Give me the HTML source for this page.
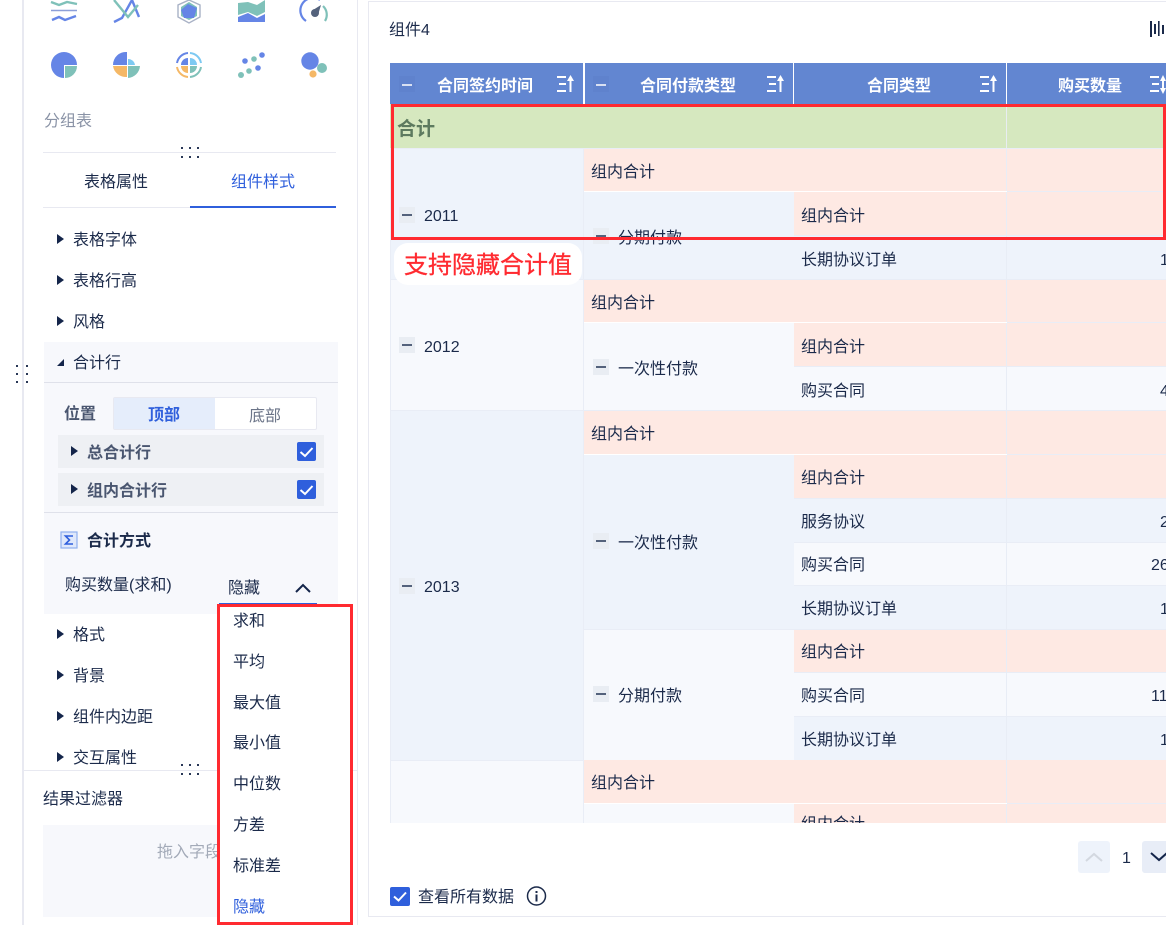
<!DOCTYPE html>
<html><head><meta charset="utf-8"><style>
html,body{margin:0;padding:0;background:#fff}
#r{position:relative;width:1166px;height:925px;overflow:hidden;background:#fff;font-family:"Liberation Sans","Noto Sans CJK SC",sans-serif;font-size:16px;color:#1b2a4a}
#r div,#r span.a{position:absolute;box-sizing:border-box}
.t{white-space:nowrap;line-height:22px;margin-top:2px}
.m{width:16px;height:16px;background:#e9edf3}
.m:after{content:"";position:absolute;left:3px;top:7px;width:10px;height:2px;background:#54627c}
.tri{width:0;height:0;border-left:7px solid #14254a;border-top:5.5px solid transparent;border-bottom:5.5px solid transparent}
.cb{width:19px;height:19px;background:#2f5fdc;border-radius:2px}
.cb svg{position:absolute;left:0;top:0}
.h{color:#fff;font-weight:bold;line-height:22px;white-space:nowrap;top:76px}
.wm{width:16px;height:16px;top:76px;background:#5f82cd}
.wm:after{content:"";position:absolute;left:3px;top:8px;width:10px;height:2px;background:#d8e0f2}
</style></head><body><div id="r">

<!-- left rail lines -->
<div style="left:22px;top:0;width:2px;height:925px;background:#e8e9f1"></div>
<div style="left:357px;top:0;width:1px;height:925px;background:#e8e9f1"></div>

<!-- chart icons -->
<svg style="position:absolute;left:0;top:0" width="357" height="100" viewBox="0 0 357 100">
<g fill="none" stroke-width="2.4">
<path d="M51 2l8 3 8-3 10 2" stroke="#7fc1b9"/><path d="M51 10.500H77" stroke="#8d9fd8" stroke-width="1.5"/><path d="M52 20l7-3 6 3 11-4" stroke="#6585e6"/>
<path d="M114 22l8-4 10-18 7 17" stroke="#6585e6"/><path d="M114 0l14 17 10-12" stroke="#7fc1b9"/>
<path d="M189 0l11 5v12l-11 6-11-6V5z" stroke="#a9b2c6" stroke-width="1.4"/></g>
<path d="M189 2l8 5v9l-8 4-8-4V7z" fill="#7fc1b9"/><path d="M188 4l9 4-3 10h-10l-3-8z" fill="#6585e6"/>
<path d="M238 3l10-1 9 3 8-5v12l-8 4-9-4-10 3z" fill="#7fc1b9"/><path d="M238 17l10-4 9 5 8-4v8h-27z" fill="#6585e6"/>
<path d="M306 21a12 12 0 0 1 14-21" fill="none" stroke="#6585e6" stroke-width="2.2"/><path d="M323 6a12 12 0 0 1 2 15" fill="none" stroke="#7fc1b9" stroke-width="2.2"/><circle cx="315" cy="13" r="4" fill="#54627c"/><path d="M313 10l8-5-3 10z" fill="#54627c"/>
<path d="M64 52a13 13 0 1 0 0 26V65h13a13 13 0 0 0-13-13z" fill="#6585e6"/><path d="M65 66h12a12 12 0 0 1-12 12z" fill="#7fc1b9"/>
<path d="M127 52v13h-14a13 13 0 0 1 14-13z" fill="#6585e6"/><path d="M128 59a7 7 0 0 1 7 6h-7z" fill="#7dc9f2"/><path d="M113 66h14v11a13 13 0 0 1-14-11z" fill="#f5b866"/><path d="M128 66h12a13 13 0 0 1-12 12z" fill="#7fc1b9"/>
<g fill="none" stroke-width="2"><path d="M177 63a12 12 0 0 1 11-10" stroke="#6585e6"/><path d="M190 53a12 12 0 0 1 11 10" stroke="#7dc9f2"/><path d="M177 67a12 12 0 0 0 11 10" stroke="#f5b866"/><path d="M190 77a12 12 0 0 0 11-10" stroke="#7fc1b9"/></g>
<path d="M188 58v7h-7a7 7 0 0 1 7-7z" fill="#6585e6"/><path d="M190 58a7 7 0 0 1 7 7h-7z" fill="#7dc9f2"/><path d="M181 66h7v7a7 7 0 0 1-7-7z" fill="#f5b866"/><path d="M190 66h7a7 7 0 0 1-7 7z" fill="#7fc1b9"/>
<circle cx="241" cy="75" r="3" fill="#7fc1b9"/><circle cx="249" cy="71" r="2.8" fill="#7fc1b9"/><circle cx="258" cy="68" r="2.8" fill="#6585e6"/><circle cx="245" cy="61" r="2.8" fill="#6585e6"/><circle cx="254" cy="59" r="2.8" fill="#7fc1b9"/><circle cx="262" cy="55" r="2.8" fill="#6585e6"/>
<circle cx="310" cy="61" r="8.700" fill="#6585e6"/><circle cx="322" cy="68" r="5" fill="#7fc1b9"/><circle cx="313" cy="74" r="3.6" fill="#f5b866"/>
</svg>

<div class="t" style="left:44px;top:109px;color:#8a93a6">分组表</div>
<div style="left:43px;top:152px;width:293px;height:1px;background:#e8e9f1"></div>
<svg style="position:absolute;left:180px;top:146px" width="20" height="14"><g fill="#2a3857"><rect x="1" y="1" width="2" height="2"/><rect x="9" y="1" width="2" height="2"/><rect x="17" y="1" width="2" height="2"/><rect x="1" y="10" width="2" height="2"/><rect x="9" y="10" width="2" height="2"/><rect x="17" y="10" width="2" height="2"/></g></svg>
<div class="t" style="left:84px;top:170px">表格属性</div>
<div class="t" style="left:231px;top:170px;color:#2f5fdc">组件样式</div>
<div style="left:43px;top:207px;width:147px;height:1px;background:#e8e9f1"></div>
<div style="left:190px;top:206px;width:146px;height:2px;background:#2f5fdc"></div>

<div class="tri" style="left:57px;top:234px"></div><div class="t" style="left:73px;top:228px">表格字体</div>
<div class="tri" style="left:57px;top:275px"></div><div class="t" style="left:73px;top:269px">表格行高</div>
<div class="tri" style="left:57px;top:316px"></div><div class="t" style="left:73px;top:310px">风格</div>

<!-- 合计行 panel -->
<div style="left:44px;top:342px;width:294px;height:272px;background:#f7f8fc"></div>
<div style="left:44px;top:382px;width:294px;height:1px;background:#dfe1ea"></div>
<svg style="position:absolute;left:56px;top:358px" width="9" height="9"><path d="M1 8L8 1V8z" fill="#14254a"/></svg>
<div class="t" style="left:73px;top:351px">合计行</div>
<div class="t" style="left:64px;top:402px;color:#4a5670;font-weight:bold">位置</div>
<div style="left:113px;top:397px;width:204px;height:33px;background:#fff;border:1px solid #e8e9f1;border-radius:2px"></div>
<div style="left:114px;top:398px;width:101px;height:31px;background:#e5edfb"></div>
<div class="t" style="left:148px;top:403px;color:#2f5fdc;font-weight:bold">顶部</div>
<div class="t" style="left:249px;top:404px;color:#6b7488">底部</div>
<div style="left:58px;top:435px;width:266px;height:33px;background:#eef0f4"></div>
<div class="tri" style="left:71px;top:446px"></div>
<div class="t" style="left:87px;top:441px;color:#4a5670;font-weight:bold">总合计行</div>
<div class="cb" style="left:297px;top:442px"><svg width="19" height="19"><path d="M3.500 10l4.500 4 7.500-8" fill="none" stroke="#fff" stroke-width="2"/></svg></div>
<div style="left:58px;top:473px;width:266px;height:33px;background:#eef0f4"></div>
<div class="tri" style="left:71px;top:484px"></div>
<div class="t" style="left:87px;top:479px;color:#4a5670;font-weight:bold">组内合计行</div>
<div class="cb" style="left:297px;top:480px"><svg width="19" height="19"><path d="M3.500 10l4.500 4 7.500-8" fill="none" stroke="#fff" stroke-width="2"/></svg></div>
<div style="left:44px;top:512px;width:294px;height:1px;background:#dfe1ea"></div>
<svg style="position:absolute;left:60px;top:531px" width="18" height="18"><rect x="1" y="1" width="16" height="16" fill="#dfe8fb" stroke="#8fb0ee" stroke-width="1.2"/><path d="M13 5H5.500L9.500 9 5.500 13H13" fill="none" stroke="#2f5fdc" stroke-width="1.6"/></svg>
<div class="t" style="left:87px;top:529px;font-weight:bold">合计方式</div>
<div class="t" style="left:65px;top:573px">购买数量(求和)</div>
<div class="t" style="left:228px;top:576px">隐藏</div>
<svg style="position:absolute;left:294px;top:581px" width="18" height="14"><path d="M2 11L9 4l7 7" fill="none" stroke="#14254a" stroke-width="2"/></svg>
<div style="left:219px;top:603px;width:98px;height:2px;background:#2f5fdc"></div>

<div class="tri" style="left:57px;top:629px"></div><div class="t" style="left:73px;top:623px">格式</div>
<div class="tri" style="left:57px;top:670px"></div><div class="t" style="left:73px;top:664px">背景</div>
<div class="tri" style="left:57px;top:711px"></div><div class="t" style="left:73px;top:705px">组件内边距</div>
<div class="tri" style="left:57px;top:752px"></div><div class="t" style="left:73px;top:746px">交互属性</div>
<div style="left:23px;top:770px;width:334px;height:1px;background:#e8e9f1"></div>
<svg style="position:absolute;left:180px;top:763px" width="20" height="14"><g fill="#2a3857"><rect x="1" y="1" width="2" height="2"/><rect x="9" y="1" width="2" height="2"/><rect x="17" y="1" width="2" height="2"/><rect x="1" y="10" width="2" height="2"/><rect x="9" y="10" width="2" height="2"/><rect x="17" y="10" width="2" height="2"/></g></svg>
<div class="t" style="left:43px;top:787px">结果过滤器</div>
<div style="left:43px;top:825px;width:294px;height:92px;background:#f7f8fc"></div>
<div class="t" style="left:157px;top:840px;color:#a3aab8">拖入字段</div>
<svg style="position:absolute;left:15px;top:363px" width="14" height="22"><g fill="#2a3857"><rect x="1" y="2" width="2" height="2"/><rect x="11" y="2" width="2" height="2"/><rect x="1" y="10" width="2" height="2"/><rect x="11" y="10" width="2" height="2"/><rect x="1" y="18" width="2" height="2"/><rect x="11" y="18" width="2" height="2"/></g></svg>

<!-- dropdown -->
<div style="left:217px;top:604px;width:136px;height:321px;background:#fff;border:3px solid #ff2a30"></div>
<div class="t" style="left:233px;top:609px">求和</div>
<div class="t" style="left:233px;top:650px">平均</div>
<div class="t" style="left:233px;top:691px">最大值</div>
<div class="t" style="left:233px;top:731px">最小值</div>
<div class="t" style="left:233px;top:772px">中位数</div>
<div class="t" style="left:233px;top:813px">方差</div>
<div class="t" style="left:233px;top:854px">标准差</div>
<div class="t" style="left:233px;top:895px;color:#2f5fdc">隐藏</div>

<!-- right card -->
<div style="left:368px;top:1px;width:810px;height:916px;border:1px solid #e8e9f1;background:#fff"></div>
<div class="t" style="left:389px;top:18px">组件4</div>
<svg style="position:absolute;left:1149px;top:20px" width="17" height="18"><g fill="#1b2a4a"><rect x="1" y="1" width="2" height="16"/><rect x="5" y="4" width="2" height="10"/><rect x="9" y="1" width="1.6" height="15"/><rect x="13" y="5" width="2" height="9"/></g></svg>

<!-- table -->
<div style="left:390px;top:63px;width:776px;height:760px;overflow:hidden;background:#e9edf6" id="tb">
<!-- backgrounds, relative to 390,63 -->
<div style="left:0;top:0;width:776px;height:41px;background:#6286d1"></div>
<div style="left:193px;top:0;width:1.5px;height:41px;background:#fff"></div>
<div style="left:403px;top:0;width:1px;height:41px;background:#fff"></div>
<div style="left:616px;top:0;width:1px;height:41px;background:#fff"></div>
<div style="left:0;top:41px;width:776px;height:44px;background:#d6e8bf"></div>
<div style="left:616px;top:41px;width:1px;height:44px;background:#e8edf2"></div>

<div style="left:1px;top:86px;width:192px;height:130px;background:#eef3fb"></div>
<div style="left:1px;top:217px;width:192px;height:130px;background:#f7f9fd"></div>
<div style="left:1px;top:348px;width:192px;height:349px;background:#eef3fb"></div>
<div style="left:1px;top:698px;width:192px;height:70px;background:#f7f9fd"></div>

<div style="left:194px;top:86px;width:582px;height:42px;background:#fee9e3"></div>
<div style="left:194px;top:129px;width:210px;height:87px;background:#eef3fb"></div>
<div style="left:404px;top:129px;width:372px;height:43px;background:#fee9e3"></div>
<div style="left:404px;top:173px;width:372px;height:43px;background:#eef3fb"></div>

<div style="left:194px;top:217px;width:582px;height:42px;background:#fee9e3"></div>
<div style="left:194px;top:260px;width:210px;height:87px;background:#f7f9fd"></div>
<div style="left:404px;top:260px;width:372px;height:43px;background:#fee9e3"></div>
<div style="left:404px;top:304px;width:372px;height:43px;background:#f7f9fd"></div>

<div style="left:194px;top:348px;width:582px;height:43px;background:#fee9e3"></div>
<div style="left:194px;top:392px;width:210px;height:174px;background:#eef3fb"></div>
<div style="left:404px;top:392px;width:372px;height:43px;background:#fee9e3"></div>
<div style="left:404px;top:436px;width:372px;height:43px;background:#eef3fb"></div>
<div style="left:404px;top:480px;width:372px;height:42px;background:#f7f9fd"></div>
<div style="left:404px;top:523px;width:372px;height:43px;background:#eef3fb"></div>
<div style="left:194px;top:567px;width:210px;height:130px;background:#f7f9fd"></div>
<div style="left:404px;top:567px;width:372px;height:42px;background:#fee9e3"></div>
<div style="left:404px;top:610px;width:372px;height:43px;background:#f7f9fd"></div>
<div style="left:404px;top:654px;width:372px;height:43px;background:#eef3fb"></div>

<div style="left:194px;top:697px;width:582px;height:43px;background:#fee9e3"></div>
<div style="left:194px;top:741px;width:210px;height:30px;background:#f7f9fd"></div>
<div style="left:404px;top:741px;width:372px;height:30px;background:#fee9e3"></div>
<div class="t" style="left:411px;top:749px">组内合计</div>

<!-- grid lines -->
<div style="left:616px;top:86px;width:1px;height:680px;background:#e8edf6"></div>
<div style="left:194px;top:128px;width:423px;height:1px;background:#fff"></div>
<div style="left:194px;top:259px;width:423px;height:1px;background:#fff"></div>
<div style="left:194px;top:391px;width:423px;height:1px;background:#fff"></div>
<div style="left:194px;top:740px;width:423px;height:1px;background:#fff"></div>

<!-- row text -->
<div class="t" style="left:7px;top:54px;font-size:19px;font-weight:bold;color:#5d7a5f">合计</div>
<div class="t" style="left:201px;top:97px">组内合计</div>
<div class="t" style="left:411px;top:141px">组内合计</div>
<div class="t" style="left:411px;top:185px">长期协议订单</div>
<div class="t" style="left:201px;top:228px">组内合计</div>
<div class="t" style="left:411px;top:272px">组内合计</div>
<div class="t" style="left:411px;top:316px">购买合同</div>
<div class="t" style="left:201px;top:359px">组内合计</div>
<div class="t" style="left:411px;top:403px">组内合计</div>
<div class="t" style="left:411px;top:447px">服务协议</div>
<div class="t" style="left:411px;top:490px">购买合同</div>
<div class="t" style="left:411px;top:534px">长期协议订单</div>
<div class="t" style="left:411px;top:577px">组内合计</div>
<div class="t" style="left:411px;top:621px">购买合同</div>
<div class="t" style="left:411px;top:665px">长期协议订单</div>
<div class="t" style="left:201px;top:708px">组内合计</div>

<div class="m" style="left:9px;top:144px"></div><div class="t" style="left:34px;top:141px">2011</div>
<div class="m" style="left:9px;top:274px"></div><div class="t" style="left:34px;top:272px">2012</div>
<div class="m" style="left:9px;top:515px"></div><div class="t" style="left:34px;top:512px">2013</div>
<div class="m" style="left:203px;top:165px"></div><div class="t" style="left:228px;top:163px">分期付款</div>
<div class="m" style="left:203px;top:296px"></div><div class="t" style="left:228px;top:294px">一次性付款</div>
<div class="m" style="left:203px;top:470px"></div><div class="t" style="left:228px;top:468px">一次性付款</div>
<div class="m" style="left:203px;top:623px"></div><div class="t" style="left:228px;top:621px">分期付款</div>

<div class="t" style="left:770px;top:185px">1</div>
<div class="t" style="left:770px;top:316px">4</div>
<div class="t" style="left:770px;top:447px">2</div>
<div class="t" style="left:761px;top:490px">26</div>
<div class="t" style="left:770px;top:534px">1</div>
<div class="t" style="left:761px;top:621px">11</div>
<div class="t" style="left:770px;top:665px">1</div>
</div>

<!-- header text, page coords -->
<div class="wm" style="left:399px"></div>
<div class="h" style="left:437px">合同签约时间</div>
<div class="wm" style="left:593px"></div>
<div class="h" style="left:640px">合同付款类型</div>
<div class="h" style="left:867px">合同类型</div>
<div class="h" style="left:1058px">购买数量</div>
<svg style="position:absolute;left:556px;top:74px" width="20" height="20"><path d="M1 3h9M3 10h7M1 17h9M14.500 18V6" fill="none" stroke="#fff" stroke-width="2"/><path d="M11 7L14.500 1 18 7z" fill="#fff"/></svg>
<svg style="position:absolute;left:766px;top:74px" width="20" height="20"><path d="M1 3h9M3 10h7M1 17h9M14.500 18V6" fill="none" stroke="#fff" stroke-width="2"/><path d="M11 7L14.500 1 18 7z" fill="#fff"/></svg>
<svg style="position:absolute;left:979px;top:74px" width="20" height="20"><path d="M1 3h9M3 10h7M1 17h9M14.500 18V6" fill="none" stroke="#fff" stroke-width="2"/><path d="M11 7L14.500 1 18 7z" fill="#fff"/></svg>
<svg style="position:absolute;left:1149px;top:74px" width="17" height="20"><path d="M1 3h9M3 10h7M1 17h9M14 7v8" fill="none" stroke="#fff" stroke-width="2"/><path d="M11 7L14 1l3 6zM11 14l3 6 3-6z" fill="#fff"/></svg>

<!-- annotation -->
<div style="left:391px;top:104px;width:775px;height:136px;border:3px solid #ff2a30"></div>
<div style="left:394px;top:243px;width:188px;height:42px;background:#fff;border-radius:14px"></div>
<div class="t" style="left:404px;top:249px;font-size:24px;line-height:30px;color:#ff2a30;-webkit-text-stroke:.3px #ff2a30">支持隐藏合计值</div>

<!-- pagination -->
<div style="left:1078px;top:841px;width:32px;height:32px;background:#eef3fb;border-radius:3px"></div>
<svg style="position:absolute;left:1084px;top:850px" width="20" height="14"><path d="M2 11l8-7 8 7" fill="none" stroke="#d3d8e0" stroke-width="2"/></svg>
<div class="t" style="left:1122px;top:846px">1</div>
<div style="left:1142px;top:841px;width:32px;height:32px;background:#e8edf7;border-radius:3px"></div>
<svg style="position:absolute;left:1150px;top:850px" width="16" height="14"><path d="M1 3l8 7 8-7" fill="none" stroke="#14254a" stroke-width="2"/></svg>

<!-- bottom checkbox -->
<div class="cb" style="left:390px;top:887px;width:20px;height:19px"><svg width="20" height="19"><path d="M4 9.500l4.500 4 7.500-8" fill="none" stroke="#fff" stroke-width="2"/></svg></div>
<div class="t" style="left:418px;top:885px">查看所有数据</div>
<svg style="position:absolute;left:526px;top:885px" width="22" height="22"><circle cx="10.500" cy="11" r="9" fill="none" stroke="#1b2a4a" stroke-width="1.500"/><rect x="9.500" y="9.500" width="2" height="7" fill="#1b2a4a"/><rect x="9.500" y="6" width="2" height="2" fill="#1b2a4a"/></svg>

</div></body></html>
